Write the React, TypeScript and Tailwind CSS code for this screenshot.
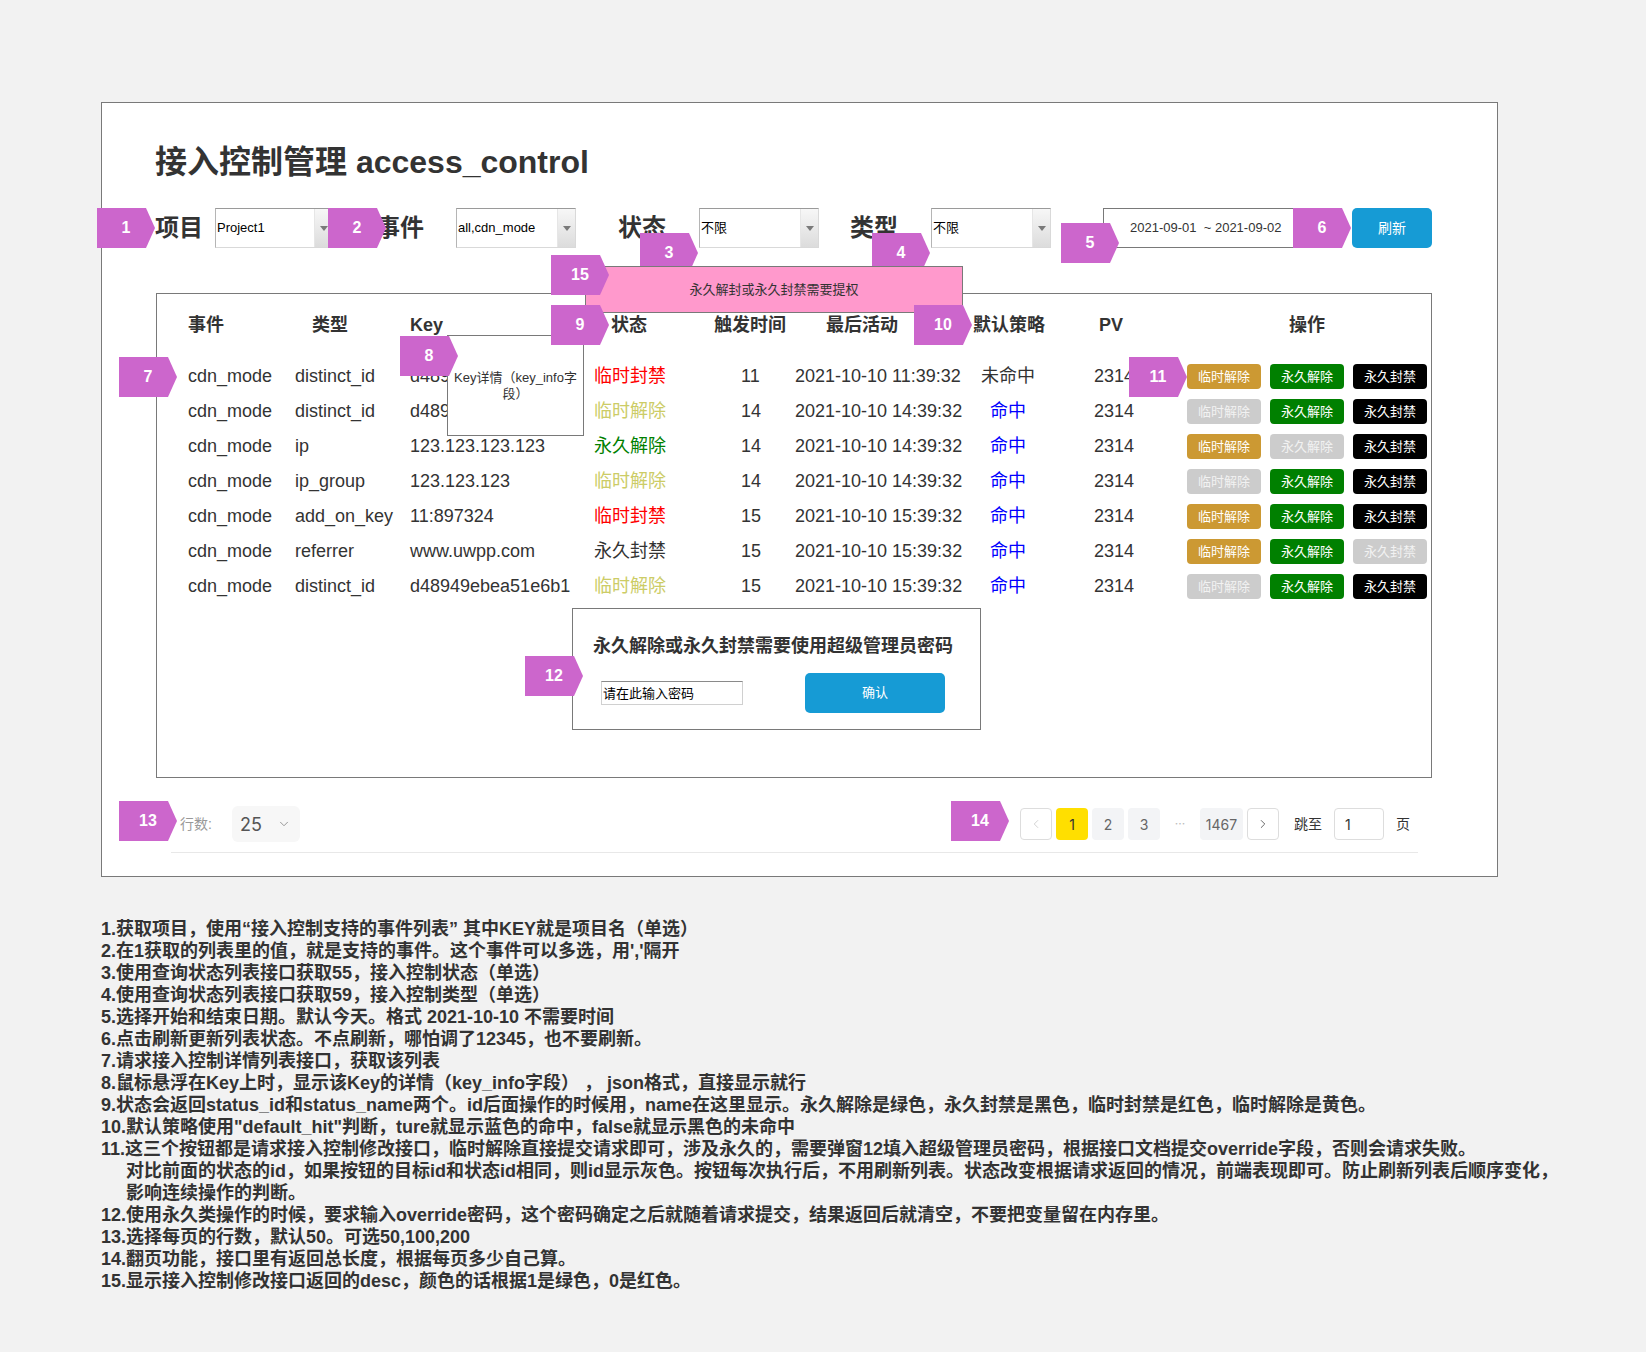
import React from "react";
import { ChevronDown, ChevronLeft, ChevronRight } from "lucide-react";

const Marker = ({ n, className }: { n: string; className: string }) => (
  <div
    className={`absolute flex h-[40px] w-[58px] items-center justify-center bg-[#cc66cc] text-[16px] font-bold text-white [clip-path:polygon(0_0,49px_0,58px_50%,49px_100%,0_100%)] ${className}`}
  >
    {n}
  </div>
);

const Select = ({ value, className }: { value: string; className: string }) => (
  <div className={`flex h-[40px] shrink-0 border border-[#d9d9d9] border-t-[#9a9a9a] border-l-[#b5b5b5] bg-white ${className}`}>
    <div className="flex flex-1 items-center overflow-hidden whitespace-nowrap pl-[1px] text-[13px] text-black">{value}</div>
    <div className="flex w-[18px] items-center justify-center border-l border-[#e6e6e6] bg-gradient-to-b from-[#f7f7f7] to-[#dcdcdc]">
      <div className="h-0 w-0 border-l-[4px] border-r-[4px] border-t-[5px] border-l-transparent border-r-transparent border-t-[#7a7a7a]" />
    </div>
  </div>
);

type Btn = "on" | "off";
type Row = {
  type: string;
  key: string;
  status: string;
  sc: string;
  trig: string;
  last: string;
  hit: boolean;
  b: [Btn, Btn, Btn];
};

const RED = "text-[#ff0000]";
const YEL = "text-[#cccc66]";
const GRN = "text-[#008000]";
const BLK = "text-[#333333]";

const rows: Row[] = [
  { type: "distinct_id", key: "d48949ebea51e6b1", status: "临时封禁", sc: RED, trig: "11", last: "2021-10-10 11:39:32", hit: false, b: ["on", "on", "on"] },
  { type: "distinct_id", key: "d48949ebea51e6b1", status: "临时解除", sc: YEL, trig: "14", last: "2021-10-10 14:39:32", hit: true, b: ["off", "on", "on"] },
  { type: "ip", key: "123.123.123.123", status: "永久解除", sc: GRN, trig: "14", last: "2021-10-10 14:39:32", hit: true, b: ["on", "off", "on"] },
  { type: "ip_group", key: "123.123.123", status: "临时解除", sc: YEL, trig: "14", last: "2021-10-10 14:39:32", hit: true, b: ["off", "on", "on"] },
  { type: "add_on_key", key: "11:897324", status: "临时封禁", sc: RED, trig: "15", last: "2021-10-10 15:39:32", hit: true, b: ["on", "on", "on"] },
  { type: "referrer", key: "www.uwpp.com", status: "永久封禁", sc: BLK, trig: "15", last: "2021-10-10 15:39:32", hit: true, b: ["on", "on", "off"] },
  { type: "distinct_id", key: "d48949ebea51e6b1", status: "临时解除", sc: YEL, trig: "15", last: "2021-10-10 15:39:32", hit: true, b: ["off", "on", "on"] },
];

const OFF = "bg-[#cccccc] text-[#f2f2f2]";
const TEMP = "bg-[#cc9933] text-white";
const PERM = "bg-[#008000] text-white";
const BAN = "bg-black text-white";

const ActBtn = ({ label, cls }: { label: string; cls: string }) => (
  <div className={`flex h-[25px] w-[74px] items-center justify-center rounded-[4px] text-[13px] ${cls}`}>{label}</div>
);

const notes: { t: string; indent?: boolean }[] = [
  { t: "1.获取项目，使用“接入控制支持的事件列表” 其中KEY就是项目名（单选）" },
  { t: "2.在1获取的列表里的值，就是支持的事件。这个事件可以多选，用','隔开" },
  { t: "3.使用查询状态列表接口获取55，接入控制状态（单选）" },
  { t: "4.使用查询状态列表接口获取59，接入控制类型（单选）" },
  { t: "5.选择开始和结束日期。默认今天。格式 2021-10-10 不需要时间" },
  { t: "6.点击刷新更新列表状态。不点刷新，哪怕调了12345，也不要刷新。" },
  { t: "7.请求接入控制详情列表接口，获取该列表" },
  { t: "8.鼠标悬浮在Key上时，显示该Key的详情（key_info字段） ， json格式，直接显示就行" },
  { t: "9.状态会返回status_id和status_name两个。id后面操作的时候用，name在这里显示。永久解除是绿色，永久封禁是黑色，临时封禁是红色，临时解除是黄色。" },
  { t: "10.默认策略使用\"default_hit\"判断，ture就显示蓝色的命中，false就显示黑色的未命中" },
  { t: "11.这三个按钮都是请求接入控制修改接口，临时解除直接提交请求即可，涉及永久的，需要弹窗12填入超级管理员密码，根据接口文档提交override字段，否则会请求失败。" },
  { t: "对比前面的状态的id，如果按钮的目标id和状态id相同，则id显示灰色。按钮每次执行后，不用刷新列表。状态改变根据请求返回的情况，前端表现即可。防止刷新列表后顺序变化，", indent: true },
  { t: "影响连续操作的判断。", indent: true },
  { t: "12.使用永久类操作的时候，要求输入override密码，这个密码确定之后就随着请求提交，结果返回后就清空，不要把变量留在内存里。" },
  { t: "13.选择每页的行数，默认50。可选50,100,200" },
  { t: "14.翻页功能，接口里有返回总长度，根据每页多少自己算。" },
  { t: "15.显示接入控制修改接口返回的desc，颜色的话根据1是绿色，0是红色。" },
];

export default function App() {
  return (
    <div className="min-h-[1352px] w-[1646px] bg-[#f2f2f2] pl-[101px] pt-[102px] font-['Liberation_Sans','Noto_Sans_CJK_SC',sans-serif] text-[#333333]">
      <div className="relative h-[775px] w-[1397px] border border-[#797979] bg-white">
        <h1 className="ml-[53px] mt-[39px] h-[40px] whitespace-nowrap text-[32px] font-bold leading-[40px]">接入控制管理 access_control</h1>

        {/* filter row */}
        <div className="ml-[53px] mt-[26px] flex h-[40px] items-center">
          <span className="w-[48px] shrink-0 whitespace-nowrap text-[24px] font-bold">项目</span>
          <Select className="ml-[12px] w-[118px]" value="Project1" />
          <span className="ml-[43px] w-[48px] shrink-0 whitespace-nowrap text-[24px] font-bold">事件</span>
          <Select className="ml-[32px] w-[120px]" value="all,cdn_mode" />
          <span className="ml-[42px] w-[48px] shrink-0 whitespace-nowrap text-[24px] font-bold">状态</span>
          <Select className="ml-[33px] w-[120px]" value="不限" />
          <span className="ml-[31px] w-[48px] shrink-0 whitespace-nowrap text-[24px] font-bold">类型</span>
          <Select className="ml-[33px] w-[120px]" value="不限" />
          <div className="ml-[52px] flex h-[40px] w-[202px] shrink-0 items-center whitespace-pre border border-[#797979] pl-[26px] text-[13px]">
            {"2021-09-01  ~ 2021-09-02"}
          </div>
          <div className="ml-[47px] flex h-[40px] w-[80px] shrink-0 items-center justify-center rounded-[5px] bg-[#169bd5] text-[14px] text-white">刷新</div>
        </div>

        {/* table */}
        <div className="ml-[54px] mt-[45px] h-[485px] w-[1276px] border border-[#797979] pl-[31px] pt-[13px]">
          <div className="grid h-[36px] grid-cols-[107px_115px_184px_120px_81px_178px_121px_93px_240px] items-center whitespace-nowrap text-[18px] font-bold">
            <div>事件</div>
            <div className="pl-[17px]">类型</div>
            <div>Key</div>
            <div className="pl-[17px]">状态</div>
            <div>触发时间</div>
            <div className="pl-[31px]">最后活动</div>
            <div>默认策略</div>
            <div className="pl-[5px]">PV</div>
            <div className="pl-[102px]">操作</div>
          </div>
          <div className="mt-[16px]">
            {rows.map((r, i) => (
              <div
                key={i}
                className="grid h-[35px] grid-cols-[107px_115px_184px_120px_81px_178px_121px_93px_240px] items-center whitespace-nowrap text-[18px]"
              >
                <div>cdn_mode</div>
                <div>{r.type}</div>
                <div>{r.key}</div>
                <div className={r.sc}>{r.status}</div>
                <div className="pl-[27px]">{r.trig}</div>
                <div>{r.last}</div>
                <div>
                  <div className={`w-[70px] text-center ${r.hit ? "text-[#0000ff]" : "text-[#333333]"}`}>{r.hit ? "命中" : "未命中"}</div>
                </div>
                <div>2314</div>
                <div className="flex gap-[9px]">
                  <ActBtn label="临时解除" cls={r.b[0] === "on" ? TEMP : OFF} />
                  <ActBtn label="永久解除" cls={r.b[1] === "on" ? PERM : OFF} />
                  <ActBtn label="永久封禁" cls={r.b[2] === "on" ? BAN : OFF} />
                </div>
              </div>
            ))}
          </div>
        </div>

        {/* bottom pagination */}
        <div className="ml-[69px] mt-[28px] w-[1247px] border-b border-[#e8e8e8] pb-[10px]">
          <div className="flex h-[36px] items-center justify-between">
            <div className="flex items-center pl-[9px]">
              <span className="w-[52px] text-[14px] text-[#999999]">行数:</span>
              <div className="flex h-[36px] w-[68px] items-center justify-between rounded-[6px] bg-[#f7f7f7] pl-[8px] pr-[9px] font-['Inter',sans-serif] text-[18px] text-[#555555]">
                25
                <ChevronDown size={14} strokeWidth={1.5} className="text-[#888888]" />
              </div>
            </div>
            <div className="flex items-center pr-[8px] font-['Inter',sans-serif] text-[14px]">
              <div className="flex h-[32px] w-[32px] items-center justify-center rounded-[4px] border border-[#dddddd] bg-white text-[#cccccc]">
                <ChevronLeft size={14} strokeWidth={1.5} />
              </div>
              <div className="ml-[4px] flex h-[32px] w-[32px] items-center justify-center rounded-[4px] bg-[#ffdf00] text-[#333333]">1</div>
              <div className="ml-[4px] flex h-[32px] w-[32px] items-center justify-center rounded-[4px] bg-[#f3f4f6] text-[#666666]">2</div>
              <div className="ml-[4px] flex h-[32px] w-[32px] items-center justify-center rounded-[4px] bg-[#f3f4f6] text-[#666666]">3</div>
              <div className="ml-[4px] flex h-[32px] w-[32px] items-center justify-center text-[12px] text-[#bbbbbb]">···</div>
              <div className="ml-[4px] flex h-[32px] w-[43px] items-center justify-center rounded-[4px] bg-[#f3f4f6] text-[#666666]">1467</div>
              <div className="ml-[4px] flex h-[32px] w-[32px] items-center justify-center rounded-[4px] border border-[#dddddd] bg-white text-[#555555]">
                <ChevronRight size={14} strokeWidth={1.5} />
              </div>
              <span className="ml-[15px] font-['Liberation_Sans','Noto_Sans_CJK_SC',sans-serif] text-[#333333]">跳至</span>
              <div className="ml-[12px] flex h-[32px] w-[50px] items-center rounded-[4px] border border-[#dddddd] pl-[10px] text-[#333333]">1</div>
              <span className="ml-[12px] font-['Liberation_Sans','Noto_Sans_CJK_SC',sans-serif] text-[#333333]">页</span>
            </div>
          </div>
        </div>

        {/* overlays */}
        <div className="absolute left-[483px] top-[163px] z-10 flex h-[47px] w-[378px] items-center justify-center border border-[#797979] bg-[#ff99cc] text-[13px] text-[#333333]">
          永久解封或永久封禁需要提权
        </div>

        <div className="absolute left-[345px] top-[232px] z-10 h-[101px] w-[137px] border border-[#797979] bg-white px-[4px] pt-[34px] text-center text-[13px] leading-[16px] text-[#333333]">
          Key详情（key_info字段）
        </div>

        <div className="absolute left-[470px] top-[505px] z-10 h-[122px] w-[409px] border border-[#797979] bg-white pt-[26px]">
          <div className="h-[22px] whitespace-nowrap pl-[20px] text-[18px] font-bold leading-[22px]">永久解除或永久封禁需要使用超级管理员密码</div>
          <div className="mt-[16px] flex h-[40px] items-center pl-[28px]">
            <input
              className="h-[24px] w-[142px] border border-[#d0d0d0] border-t-[#8a8a8a] px-[1px] text-[13px] text-black outline-none placeholder:text-black"
              placeholder="请在此输入密码"
            />
            <div className="ml-[62px] flex h-[40px] w-[140px] items-center justify-center rounded-[5px] bg-[#169bd5] text-[13px] text-white">确认</div>
          </div>
        </div>

        <Marker n="1" className="left-[-5px] top-[105px] z-20" />
        <Marker n="2" className="left-[226px] top-[105px] z-20" />
        <Marker n="3" className="left-[538px] top-[130px] z-[5]" />
        <Marker n="4" className="left-[770px] top-[130px] z-[5]" />
        <Marker n="5" className="left-[959px] top-[120px] z-20" />
        <Marker n="6" className="left-[1191px] top-[105px] z-20" />
        <Marker n="7" className="left-[17px] top-[254px] z-20" />
        <Marker n="8" className="left-[298px] top-[233px] z-20" />
        <Marker n="9" className="left-[449px] top-[202px] z-20" />
        <Marker n="10" className="left-[812px] top-[202px] z-20" />
        <Marker n="11" className="left-[1027px] top-[254px] z-20" />
        <Marker n="12" className="left-[423px] top-[553px] z-20" />
        <Marker n="13" className="left-[17px] top-[698px] z-20" />
        <Marker n="14" className="left-[849px] top-[698px] z-20" />
        <Marker n="15" className="left-[449px] top-[152px] z-20" />
      </div>

      <div className="mt-[41px] text-[18px] font-bold leading-[22px] text-[#333333]">
        {notes.map((n, i) => (
          <div key={i} className={`whitespace-pre ${n.indent ? "pl-[25px]" : ""}`}>
            {n.t}
          </div>
        ))}
      </div>
    </div>
  );
}
